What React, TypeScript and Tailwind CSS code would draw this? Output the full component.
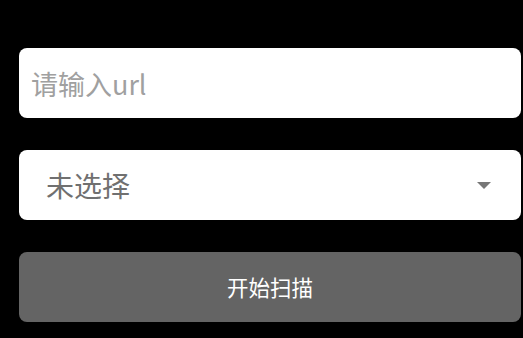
import React, { useState } from 'react';

export default function App() {
  const [url, setUrl] = useState('');

  return (
    <div
      className="w-[523px] h-[338px] bg-black pt-[48px] pl-[19px] overflow-hidden"
      style={{ fontFamily: '"Noto Sans CJK SC", "Noto Sans", sans-serif' }}
    >
      <div className="w-[502px] flex flex-col gap-[32px]">
        {/* URL input */}
        <input
          value={url}
          onChange={(e) => setUrl(e.target.value)}
          placeholder="请输入url"
          className="h-[70px] w-full rounded-[8px] bg-white px-[12px] text-[27px] text-[#333] placeholder:text-[#a0a0a0] outline-none"
        />

        {/* Select */}
        <div className="h-[70px] w-full rounded-[8px] bg-white flex items-center justify-between pl-[27px] pr-[30px]">
          <span className="text-[28px] text-[#707070]">未选择</span>
          <svg width="14" height="7" viewBox="0 0 14 7">
            <path d="M0 0h14L7 7z" fill="#777" />
          </svg>
        </div>

        {/* Scan button */}
        <button className="h-[70px] w-full rounded-[8px] bg-[#646464] text-white text-[21.5px] flex items-center justify-center">
          开始扫描
        </button>
      </div>
    </div>
  );
}
